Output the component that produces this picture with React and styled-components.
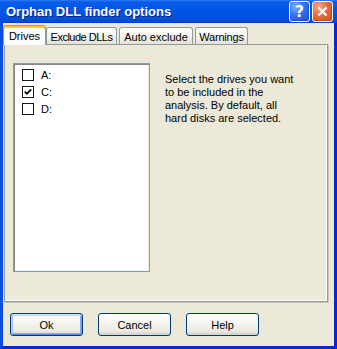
import React from "react";
import styled, { createGlobalStyle } from "styled-components";

const Global = createGlobalStyle`
  html, body { margin: 0; padding: 0; width: 337px; height: 349px; overflow: hidden; background: #ece9d8; }
  * { box-sizing: border-box; }
  body { font-family: "Liberation Sans", Arial, sans-serif; font-size: 11px; color: #000; }
`;

const Window = styled.div`
  width: 337px;
  height: 349px;
  display: flex;
  flex-direction: column;
`;

const TitleBar = styled.div`
  height: 23px;
  flex: none;
  display: flex;
  align-items: center;
  padding: 0 4px 0 6px;
  background: linear-gradient(to bottom, #2a7cf4 0px, #0a5ce8 2px, #0058e6 8px, #0054e3 14px, #0050dc 19px, #0046d4 22px, #003cc8 23px);
`;

const Title = styled.div`
  flex: 1;
  color: #fff;
  font-family: "Liberation Sans", Arial, sans-serif;
  font-weight: bold;
  font-size: 13px;
  text-shadow: 1px 1px 0 #0a1e8c;
  margin-top: -1px;
`;

const TitleButtons = styled.div`
  display: flex;
  gap: 2px;
  align-self: flex-start;
  margin-top: 1px;
`;

const TitleButton = styled.div`
  width: 21px;
  height: 21px;
  border: 1px solid #fff;
  border-radius: 3px;
  display: flex;
  align-items: center;
  justify-content: center;
  color: #fff;
  background: ${(p) =>
    p.$close
      ? "radial-gradient(circle at 30% 25%, #f8a58a 0%, #e86a45 45%, #d24a20 100%)"
      : "radial-gradient(circle at 30% 25%, #7fb0ff 0%, #2f72f2 45%, #1552db 100%)"};
  box-shadow: inset -1px -1px 0 rgba(0, 0, 0, 0.15);
`;

const HelpGlyph = styled.span`
  font-family: "DejaVu Sans", sans-serif;
  font-weight: bold;
  font-size: 15px;
  line-height: 1;
  margin-top: 1px;
`;

const Frame = styled.div`
  flex: 1;
  display: flex;
  flex-direction: column;
  background: #ece9d8;
  border-left: 3px solid #0b4ddf;
  border-right: 3px solid #0828d6;
  border-bottom: 3px solid #0828d6;
  padding: 2px 0 0 0;
`;

const TabStrip = styled.div`
  display: flex;
  align-items: flex-end;
  height: 19px;
  position: relative;
  z-index: 1;
`;

const Tab = styled.div`
  width: ${(p) => p.$w}px;
  margin-right: ${(p) => p.$mr || 0}px;
  height: ${(p) => (p.$active ? 20 : 17)}px;
  margin-bottom: ${(p) => (p.$active ? -1 : 0)}px;
  border: 1px solid #919b9c;
  border-bottom: none;
  border-radius: 3px 3px 0 0;
  text-align: center;
  white-space: nowrap;
  font-size: 11px;
  letter-spacing: ${(p) => p.$ls || 0}px;
  line-height: 13px;
  padding-top: ${(p) => (p.$active ? 4 : 3)}px;
  ${(p) =>
    p.$active
      ? `
    background: #fcfcfe;
    border-top: 1px solid #e68b2c;
    box-shadow: inset 0 2px 0 #ffc73c;
  `
      : `
    background: linear-gradient(to bottom, #ffffff 0%, #f3f3ef 50%, #e3e2da 100%);
  `}
`;

const Panel = styled.div`
  width: 324px;
  height: 258px;
  margin-left: 1px;
  border: 1px solid #919b9c;
  box-shadow: inset -1px -1px 0 #ffffff, 1px 1px 0 #c9c6b6;
  background: #ece9d8;
  display: flex;
  align-items: flex-start;
  padding: 18px 0 0 8px;
`;

const ListBox = styled.div`
  width: 137px;
  height: 209px;
  background: #fff;
  border: 1px solid #7f9db9;
  box-shadow: inset 1px 1px 0 #8a877c, inset -1px -1px 0 #f1efe2;
  padding: 2px 0 0 8px;
  display: flex;
  flex-direction: column;
`;

const Item = styled.div`
  height: 17px;
  display: flex;
  align-items: center;
  gap: 7px;
`;

const Box = styled.div`
  width: 12px;
  height: 12px;
  border: 1px solid #1a1a1a;
  background: #fff;
  display: flex;
  align-items: center;
  justify-content: center;
`;

const Label = styled.span`
  font-size: 11px;
`;

const Description = styled.p`
  margin: 10px 0 0 15px;
  font-size: 11px;
  line-height: 13px;
  white-space: nowrap;
`;

const ButtonRow = styled.div`
  display: flex;
  gap: 15px;
  margin-top: 11px;
  padding-left: 7px;
`;

const Button = styled.div`
  width: 73px;
  height: 23px;
  border: 1px solid #003c74;
  border-radius: 3px;
  display: flex;
  align-items: center;
  justify-content: center;
  font-size: 11px;
  background: linear-gradient(to bottom, #ffffff 0%, #f5f4ef 40%, #ecebe5 80%, #d6d0c5 100%);
  box-shadow: ${(p) =>
    p.$default
      ? "inset 0 1px 0 #cee7ff, inset 1px 0 0 #bccbf9, inset -1px 0 0 #7c99e8, inset 0 -1px 0 #6982ee, inset 0 2px 0 #bcd4f6, inset 2px 0 0 #a9c1f5, inset -2px 0 0 #8aa6ec, inset 0 -2px 0 #89ade4"
      : "none"};
`;

function Check({ checked }) {
  return (
    <Box>
      {checked && (
        <svg width="10" height="10" viewBox="0 0 10 10">
          <path d="M1.8 4.6 L3.9 6.8 L8.2 2.4" fill="none" stroke="#000" strokeWidth="1.8" />
        </svg>
      )}
    </Box>
  );
}

export default function App() {
  return (
    <>
      <Global />
      <Window>
        <TitleBar>
          <Title>Orphan DLL finder options</Title>
          <TitleButtons>
            <TitleButton>
              <HelpGlyph>?</HelpGlyph>
            </TitleButton>
            <TitleButton $close>
              <svg width="11" height="11" viewBox="0 0 11 11">
                <path d="M1.5 1.5 L9.5 9.5 M9.5 1.5 L1.5 9.5" stroke="#fff" strokeWidth="2.2" />
              </svg>
            </TitleButton>
          </TitleButtons>
        </TitleBar>
        <Frame>
          <TabStrip>
            <Tab $active $w={43}>Drives</Tab>
            <Tab $w={71} $mr={2} $ls={-0.5}>Exclude DLLs</Tab>
            <Tab $w={74} $mr={2}>Auto exclude</Tab>
            <Tab $w={53} $ls={-0.2}>Warnings</Tab>
          </TabStrip>
          <Panel>
            <ListBox>
              <Item>
                <Check />
                <Label>A:</Label>
              </Item>
              <Item>
                <Check checked />
                <Label>C:</Label>
              </Item>
              <Item>
                <Check />
                <Label>D:</Label>
              </Item>
            </ListBox>
            <Description>
              Select the drives you want
              <br />
              to be included in the
              <br />
              analysis. By default, all
              <br />
              hard disks are selected.
            </Description>
          </Panel>
          <ButtonRow>
            <Button $default>Ok</Button>
            <Button>Cancel</Button>
            <Button>Help</Button>
          </ButtonRow>
        </Frame>
      </Window>
    </>
  );
}
